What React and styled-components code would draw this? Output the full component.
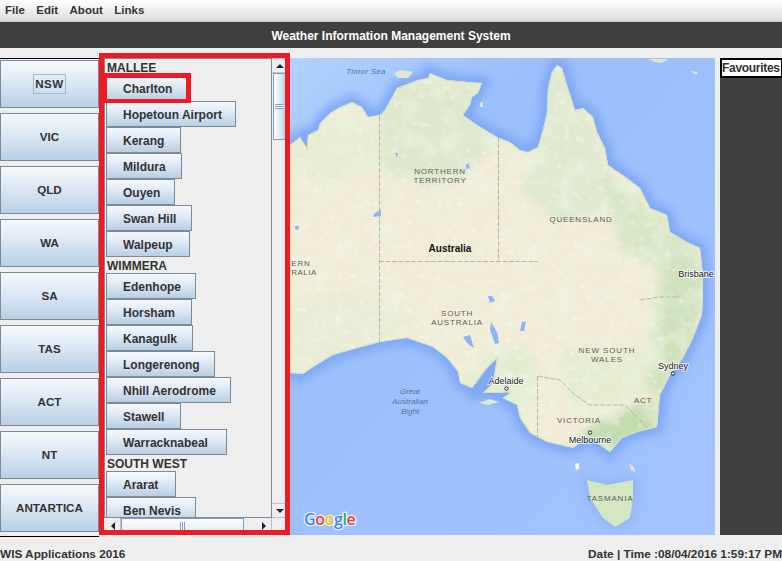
import styled, { createGlobalStyle } from "styled-components";

const GlobalStyle = createGlobalStyle`
  html, body {
    margin: 0;
    padding: 0;
    background: #eeeeee;
    overflow: hidden;
  }
  body {
    font-family: "Liberation Sans", Arial, sans-serif;
    font-size: 12px;
    font-weight: 700;
    color: #333333;
  }
`;

const STATES = ["NSW", "VIC", "QLD", "WA", "SA", "TAS", "ACT", "NT", "ANTARTICA"];

const STATIONS = [
  {
    region: "MALLEE",
    towns: [
      ["Charlton", 84],
      ["Hopetoun Airport", 130],
      ["Kerang", 75],
      ["Mildura", 76],
      ["Ouyen", 69],
      ["Swan Hill", 86],
      ["Walpeup", 84],
    ],
  },
  {
    region: "WIMMERA",
    towns: [
      ["Edenhope", 90],
      ["Horsham", 86],
      ["Kanagulk", 87],
      ["Longerenong", 109],
      ["Nhill Aerodrome", 125],
      ["Stawell", 75],
      ["Warracknabeal", 121],
    ],
  },
  {
    region: "SOUTH WEST",
    towns: [
      ["Ararat", 70],
      ["Ben Nevis", 90],
    ],
  },
];

const COAST =
  "M290 145L300 137 307 148 308 135 318 130 320 123 330 113 340 107 352 102 362 107 368 117 380 115 385 110 397 88 418 80 428 78 430 73 447 80 467 82 482 83 478 93 472 97 470 105 463 115 477 125 497 137 510 142 520 150 528 152 538 147 543 130 547 112 548 88 552 72 557 65 562 68 567 85 575 110 583 108 593 117 597 132 605 148 608 165 627 178 640 188 650 208 667 215 670 232 687 242 700 248 703 275 703 295 702 315 693 338 683 358 670 375 660 395 657 427 637 432 622 438 610 452 600 445 588 437 573 448 547 442 530 433 520 418 517 405 503 398 510 393 507 392 497 393 483 393 493 383 497 358 487 368 472 388 460 383 458 372 447 358 433 347 407 338 380 342 357 348 333 355 313 367 303 374 290 373Z";
const TASMANIA = "M587 480L607 485 633 480 633 498 630 518 615 527 603 518 590 498Z";

const Page = styled.div`
  width: 782px;
  height: 561px;
  display: flex;
  flex-direction: column;
  overflow: hidden;
`;

const MenuBar = styled.div`
  height: 21px;
  flex: none;
  display: flex;
  align-items: center;
  gap: 11.5px;
  padding-left: 5px;
  font-size: 11.5px;
  background: linear-gradient(#ffffff, #dcdcdc);
  border-bottom: 1px solid #c9c9c9;
`;

const MenuItem = styled.span`
  line-height: 18px;
  padding-bottom: 2px;
`;

const TitleBar = styled.div`
  height: 26px;
  flex: none;
  display: flex;
  align-items: center;
  justify-content: center;
  padding-top: 1px;
  box-sizing: border-box;
  background: #404040;
  color: #ffffff;
`;

const Body = styled.div`
  height: 487px;
  flex: none;
  display: flex;
  align-items: flex-start;
`;

const StateColumn = styled.div`
  width: 99px;
  height: 475px;
  margin-top: 10px;
  padding: 1px 0 1px;
  flex: none;
  display: flex;
  flex-direction: column;
  gap: 5px;
  border-top: 1px solid #000000;
  border-bottom: 1px solid #000000;
`;

const MetalButton = styled.div`
  box-sizing: border-box;
  display: flex;
  align-items: center;
  border: 1px solid #7a8a99;
  background: linear-gradient(#f6f9fc 0%, #dde8f3 45%, #b8cfe5 100%);
  white-space: nowrap;
`;

const StateButton = styled(MetalButton)`
  height: 48px;
  flex: none;
  justify-content: center;
  padding-bottom: 1px;
  font-size: 11.6px;
`;

const FocusRing = styled.span`
  padding: 2px 1px;
  line-height: 14px;
  letter-spacing: 0.5px;
  border: 1px solid #a3b8cc;
`;

const HighlightPanel = styled.div`
  position: relative;
  box-sizing: border-box;
  width: 191px;
  height: 482px;
  margin-top: 5px;
  flex: none;
  border: 5px solid #ed1c24;
`;

const ScrollPane = styled.div`
  height: 100%;
  display: grid;
  grid-template-columns: 168px 13px;
  grid-template-rows: 460px 12px;
`;

const Viewport = styled.div`
  overflow: hidden;
  padding-left: 1px;
  border: 1px solid #7a8a99;
`;

const RegionLabel = styled.div`
  height: 16px;
  line-height: 18px;
  padding-left: 1px;
`;

const TownButton = styled(MetalButton)`
  height: 26px;
  padding: 1px 0 0 16px;
`;

const VerticalBar = styled.div`
  display: flex;
  flex-direction: column;
  background: #eeeeee;
`;

const HorizontalBar = styled.div`
  display: flex;
  padding-left: 2px;
  background: #eeeeee;
`;

const ArrowButton = styled.div`
  box-sizing: border-box;
  flex: none;
  display: flex;
  align-items: center;
  justify-content: center;
  width: ${(p) => (p.$horizontal ? "15px" : "auto")};
  height: ${(p) => (p.$horizontal ? "auto" : "15px")};
  padding: ${(p) => (p.$horizontal ? "4px 0 0" : "0 0 0 2px")};
  background: #eeeeee;
  border: 1px solid #b8c4d0;
  border-width: ${(p) => (p.$horizontal ? "0 1px 0 0" : "1px 0")};
`;

const Track = styled.div`
  flex: 1;
  display: flex;
  flex-direction: ${(p) => (p.$horizontal ? "row" : "column")};
`;

const Thumb = styled.div`
  box-sizing: border-box;
  flex: none;
  display: flex;
  align-items: ${(p) => (p.$horizontal ? "flex-end" : "center")};
  justify-content: center;
  width: ${(p) => (p.$horizontal ? "123px" : "auto")};
  height: ${(p) => (p.$horizontal ? "auto" : "67px")};
  margin-left: ${(p) => (p.$horizontal ? "0" : "1px")};
  border: 1px solid #7c9bd6;
  border-bottom-width: ${(p) => (p.$horizontal ? 0 : "1px")};
  border-right-width: ${(p) => (p.$horizontal ? "1px" : 0)};
  background: ${(p) =>
    p.$horizontal
      ? "linear-gradient(#ffffff, #e6eef7 100%)"
      : "linear-gradient(90deg, #ffffff, #dde8f3 60%, #b8cfe5)"};
`;

const Grip = styled.div`
  width: ${(p) => (p.$horizontal ? "5px" : "9px")};
  height: ${(p) => (p.$horizontal ? "8px" : "5px")};
  background: ${(p) =>
    p.$horizontal
      ? "repeating-linear-gradient(90deg, #7c9bd6 0 1px, #ffffff 1px 2px)"
      : "repeating-linear-gradient(#7c9bd6 0 1px, #ffffff 1px 2px)"};
`;

const Corner = styled.div`
  background: #eeeeee;
`;

const CharltonMark = styled.div`
  position: absolute;
  left: 0;
  top: 15px;
  box-sizing: border-box;
  width: 87px;
  height: 30px;
  border: solid #ed1c24;
  border-width: 5px 5px 4px 3px;
`;

const MapPane = styled.div`
  width: 425px;
  height: 477px;
  margin-top: 10px;
  flex: none;
`;

const MapDrawing = styled.svg`
  display: block;
  width: 100%;
  height: 100%;
`;

const PlaceName = styled.text`
  font-family: "Liberation Sans", Arial, sans-serif;
  font-weight: 400;
  font-size: 8px;
  letter-spacing: ${(p) => p.$spacing || 0}px;
  fill: ${(p) => p.$fill || "#5f5f58"};
  text-anchor: middle;
`;

const CityName = styled(PlaceName)`
  font-size: 9px;
  fill: #1a1a1a;
  stroke: #ffffff;
  stroke-width: 2px;
  stroke-opacity: 0.7;
  paint-order: stroke;
`;

const SeaName = styled(PlaceName)`
  font-style: italic;
  fill: #5c7196;
`;

const Logo = styled.text`
  font-family: "Open Sans", "Liberation Sans", sans-serif;
  font-size: 16px;
  font-weight: 600;
  letter-spacing: -0.4px;
  stroke: #ffffff;
  stroke-width: 2.5px;
  stroke-opacity: 0.75;
  paint-order: stroke;
`;

const FavouritesPane = styled.div`
  width: 62px;
  height: 477px;
  margin: 10px 0 0 5px;
  flex: none;
  background: #404040;
`;

const FavouritesTitle = styled.div`
  box-sizing: border-box;
  height: 20px;
  line-height: 17px;
  letter-spacing: -0.3px;
  white-space: nowrap;
  background: #ffffff;
  border: 2px solid #000000;
  border-right-width: 1px;
`;

const StatusBar = styled.div`
  flex: 1;
  display: flex;
  align-items: flex-end;
  justify-content: space-between;
  font-size: 11.8px;
  line-height: 14px;
  white-space: nowrap;
`;

const ArrowGlyph = ({ dir }) => {
  const points = {
    up: "0,5 8,5 4,1",
    down: "0,1 8,1 4,5",
    left: "5,0 5,8 1,4",
    right: "1,0 1,8 5,4",
  };
  const wide = dir === "up" || dir === "down";
  return (
    <svg width={wide ? 8 : 6} height={wide ? 6 : 8}>
      <polygon points={points[dir]} fill="#222222" />
    </svg>
  );
};

const AustraliaMap = () => (
  <MapDrawing viewBox="290 58 425 477">
    <defs>
      <linearGradient id="sea" x1="0" y1="0" x2="1" y2="1">
        <stop offset="0" stopColor="#b2d1ff" />
        <stop offset="0.3" stopColor="#9cbffc" />
        <stop offset="1" stopColor="#a2c3fd" />
      </linearGradient>
      <filter id="soft" x="-10%" y="-10%" width="120%" height="120%">
        <feGaussianBlur stdDeviation="5" />
      </filter>
      <filter id="patch" x="-20%" y="-20%" width="140%" height="140%">
        <feGaussianBlur stdDeviation="5" />
      </filter>
      <filter id="mottle" x="0" y="0" width="100%" height="100%">
        <feTurbulence type="fractalNoise" baseFrequency="0.045" numOctaves="3" seed="7" />
        <feColorMatrix
          type="matrix"
          values="0 0 0 0 0.84  0 0 0 0 0.91  0 0 0 0 0.75  3.4 0 0 0 -1.55"
        />
      </filter>
      <filter id="speckle" x="0" y="0" width="100%" height="100%">
        <feTurbulence type="fractalNoise" baseFrequency="0.14" numOctaves="2" seed="3" />
        <feColorMatrix
          type="matrix"
          values="0 0 0 0 1  0 0 0 0 1  0 0 0 0 0.96  0 4.5 0 0 -2.65"
        />
      </filter>
      <clipPath id="land">
        <path d={COAST} />
      </clipPath>
    </defs>
    <rect x="290" y="58" width="425" height="477" fill="url(#sea)" />
    <g filter="url(#soft)">
      <path d={COAST} fill="none" stroke="#7fa8f6" strokeWidth="14" />
      <path d={TASMANIA} fill="none" stroke="#8db2f8" strokeWidth="8" />
    </g>
    <path d={COAST} fill="#f1ecd8" />
    <g clipPath="url(#land)">
      <g filter="url(#patch)">
        <path d="M380 80L480 80 470 120 500 140 470 175 430 190 380 170Z" fill="#dfe8cf" />
        <path d="M290 140L370 110 380 165 330 185 290 175Z" fill="#e8ecd2" />
        <path d="M540 70L570 70 610 170 600 215 560 225 520 190 540 140Z" fill="#e0e9d0" />
        <path d="M600 170L650 205 705 250 705 300 690 345 650 340 660 270 620 250Z" fill="#d8e6c6" />
        <path d="M670 260L700 260 695 340 660 395 630 385 660 330Z" fill="#cfe2bd" />
        <path d="M575 440L600 420 640 405 660 400 655 432 610 455Z" fill="#c2dcb0" />
        <path d="M460 385L495 345 530 345 540 380 520 425 540 445 470 400Z" fill="#e4ecd0" />
        <path d="M290 300L350 290 420 320 380 345 300 375 290 375Z" fill="#e9ecd6" />
        <path d="M560 350L660 350 640 400 570 410Z" fill="#e5ecd0" />
      </g>
      <rect x="290" y="58" width="425" height="477" filter="url(#mottle)" opacity="0.5" />
      <rect x="290" y="58" width="425" height="477" filter="url(#speckle)" opacity="0.35" />
      <path d={COAST} fill="none" stroke="#d3e3bd" strokeWidth="2" />
    </g>
    <path d={TASMANIA} fill="#d5e6c2" />
    <g fill="#dfe8cc">
      <path d="M394 73L402 70 413 72 408 78 398 78Z" />
      <path d="M648 59L668 59 662 63 655 62Z" />
      <path d="M690 71L698 72 696 75Z" />
      <path d="M480 103L483 102 483 107 480 107Z" />
      <path d="M479 403L490 399 499 402 488 405Z" />
      <path d="M629 464L634 467 635 472 631 470Z" />
    </g>
    <path d="M575 464L579 463 579 469 576 470Z" fill="#ffffff" />
    <g fill="#8fb4fa">
      <path d="M374 214L381 209 381 216 373 217Z" />
      <path d="M295 226L299 226 298 230 295 229Z" />
      <path d="M488 296L492 296 495 301 490 303Z" />
      <path d="M491 322L497 332 499 343 495 344 490 330Z" />
      <path d="M463 337L470 335 474 348 468 344Z" />
      <path d="M522 322L526 321 524 331 520 331Z" />
      <path d="M466 165L468 163 470 168 466 169Z" />
      <path d="M395 153L398 153 397 158Z" />
    </g>
    <g fill="none" stroke="#b9b8ae" strokeWidth="1" strokeDasharray="5 1.5">
      <path d="M379.5 116V342" />
      <path d="M498.5 137V261" />
      <path d="M379 261.5H538" />
      <path d="M537.5 376V438" />
      <path d="M538 376L560 380 575 395 590 405 625 405 650 430" />
      <path d="M640 300L660 297 680 297" />
    </g>
    <SeaName x="366" y="74" $spacing={0.3}>Timor Sea</SeaName>
    <PlaceName x="440" y="174" $spacing={0.8}>NORTHERN</PlaceName>
    <PlaceName x="440" y="183" $spacing={0.8}>TERRITORY</PlaceName>
    <PlaceName x="581" y="222" $spacing={0.8}>QUEENSLAND</PlaceName>
    <PlaceName x="450" y="252" $fill="#111111" style={{ fontSize: 10, fontWeight: 700 }}>
      Australia
    </PlaceName>
    <PlaceName x="301" y="266" $spacing={0.8}>ERN</PlaceName>
    <PlaceName x="304" y="275" $spacing={0.5}>RALIA</PlaceName>
    <CityName x="696" y="277">Brisbane</CityName>
    <PlaceName x="457" y="316" $spacing={0.8}>SOUTH</PlaceName>
    <PlaceName x="457" y="325" $spacing={0.8}>AUSTRALIA</PlaceName>
    <PlaceName x="607" y="353" $spacing={0.9}>NEW SOUTH</PlaceName>
    <PlaceName x="607" y="362" $spacing={0.9}>WALES</PlaceName>
    <CityName x="673" y="369">Sydney</CityName>
    <circle cx="673" cy="373.5" r="1.7" fill="#ffffff" stroke="#222222" />
    <PlaceName x="643" y="403" $spacing={0.6}>ACT</PlaceName>
    <CityName x="506" y="384">Adelaide</CityName>
    <circle cx="506.5" cy="388.5" r="1.7" fill="#ffffff" stroke="#222222" />
    <SeaName x="410" y="394">Great</SeaName>
    <SeaName x="410" y="404">Australian</SeaName>
    <SeaName x="410" y="414">Bight</SeaName>
    <PlaceName x="579" y="423" $spacing={0.8}>VICTORIA</PlaceName>
    <circle cx="590" cy="432.5" r="1.7" fill="#ffffff" stroke="#222222" />
    <CityName x="590" y="443">Melbourne</CityName>
    <PlaceName x="610" y="501" $spacing={0.8}>TASMANIA</PlaceName>
    <Logo x="304" y="525">
      <tspan fill="#4285f4">G</tspan>
      <tspan fill="#ea4335">o</tspan>
      <tspan fill="#fbbc05">o</tspan>
      <tspan fill="#4285f4">g</tspan>
      <tspan fill="#34a853">l</tspan>
      <tspan fill="#ea4335">e</tspan>
    </Logo>
  </MapDrawing>
);

export default function App() {
  return (
    <Page>
      <GlobalStyle />
      <MenuBar>
        <MenuItem>File</MenuItem>
        <MenuItem>Edit</MenuItem>
        <MenuItem>About</MenuItem>
        <MenuItem>Links</MenuItem>
      </MenuBar>
      <TitleBar>Weather Information Management System</TitleBar>
      <Body>
        <StateColumn>
          {STATES.map((name, i) => (
            <StateButton key={name}>
              {i === 0 ? <FocusRing>{name}</FocusRing> : name}
            </StateButton>
          ))}
        </StateColumn>
        <HighlightPanel>
          <ScrollPane>
            <Viewport>
              {STATIONS.map((group) => (
                <div key={group.region}>
                  <RegionLabel>{group.region}</RegionLabel>
                  {group.towns.map(([town, width]) => (
                    <TownButton key={town} style={{ width }}>
                      {town}
                    </TownButton>
                  ))}
                </div>
              ))}
            </Viewport>
            <VerticalBar>
              <ArrowButton>
                <ArrowGlyph dir="up" />
              </ArrowButton>
              <Track>
                <Thumb>
                  <Grip />
                </Thumb>
              </Track>
              <ArrowButton>
                <ArrowGlyph dir="down" />
              </ArrowButton>
            </VerticalBar>
            <HorizontalBar>
              <ArrowButton $horizontal>
                <ArrowGlyph dir="left" />
              </ArrowButton>
              <Track $horizontal>
                <Thumb $horizontal>
                  <Grip $horizontal />
                </Thumb>
              </Track>
              <ArrowButton $horizontal>
                <ArrowGlyph dir="right" />
              </ArrowButton>
            </HorizontalBar>
            <Corner />
          </ScrollPane>
          <CharltonMark />
        </HighlightPanel>
        <MapPane>
          <AustraliaMap />
        </MapPane>
        <FavouritesPane>
          <FavouritesTitle>Favourites</FavouritesTitle>
        </FavouritesPane>
      </Body>
      <StatusBar>
        <span>WIS Applications 2016</span>
        <span>Date | Time :08/04/2016 1:59:17 PM</span>
      </StatusBar>
    </Page>
  );
}
